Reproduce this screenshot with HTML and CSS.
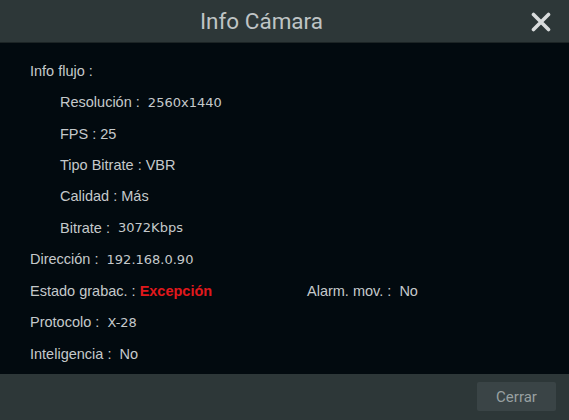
FILE: index.html
```html
<!DOCTYPE html>
<html lang="es">
<head>
<meta charset="utf-8">
<link rel="stylesheet" href="styles.css">
</head>
<body>
<div class="dialog">
  <header class="head">
    <div class="title">Info Cámara</div>
    <button class="close" aria-label="Cerrar">
      <svg width="20" height="20" viewBox="0 0 20 20"><path d="M2.5 2.5 L17.5 17.5 M17.5 2.5 L2.5 17.5" stroke="#d9dcdd" stroke-width="3.6" stroke-linecap="round"/></svg>
    </button>
  </header>
  <main class="body">
    <div class="row">Info flujo :</div>
    <div class="row sub">Resolución :&nbsp; <span class="num">2560x1440</span></div>
    <div class="row sub">FPS : 25</div>
    <div class="row sub">Tipo Bitrate : VBR</div>
    <div class="row sub">Calidad : Más</div>
    <div class="row sub">Bitrate :&nbsp; <span class="num">3072Kbps</span></div>
    <div class="row">Dirección :&nbsp; <span class="num">192.168.0.90</span></div>
    <div class="row split">
      <span>Estado grabac. : <b class="err">Excepción</b></span>
      <span>Alarm. mov. :&nbsp; No</span>
    </div>
    <div class="row">Protocolo :&nbsp; <span class="num">X-28</span></div>
    <div class="row">Inteligencia :&nbsp; No</div>
  </main>
  <footer class="foot">
    <button class="btn">Cerrar</button>
  </footer>
</div>
</body>
</html>
```
FILE: styles.css
```css
html, body {
  margin: 0;
  padding: 0;
  background: #020a0f;
}
.dialog {
  width: 569px;
  height: 420px;
  display: flex;
  flex-direction: column;
  font-family: "Liberation Sans", Arial, sans-serif;
}
.head {
  height: 43px;
  background: #2d3738;
  display: flex;
  align-items: center;
  justify-content: center;
  position: relative;
  border-bottom: 1px solid #1c2425;
  box-sizing: border-box;
}
.title {
  font-family: Roboto, "Liberation Sans", sans-serif;
  font-size: 22.5px;
  color: #bfc4c5;
  margin-top: -1px;
  margin-right: 46px;
}
.close {
  position: absolute;
  right: 17px;
  top: 11px;
  width: 22px;
  height: 22px;
  padding: 0;
  border: 0;
  background: none;
  display: flex;
  align-items: center;
  justify-content: center;
}
.body {
  flex: 1;
  background: #020a0f;
  padding: 12px 0 0 30px;
  display: flex;
  flex-direction: column;
}
.row {
  height: 31.45px;
  flex: none;
  display: flex;
  align-items: center;
  font-size: 14.5px;
  color: #c5c9cb;
  white-space: pre;
}
.row.sub {
  padding-left: 30px;
}
.num {
  font-family: "DejaVu Sans", sans-serif;
  font-size: 13px;
  color: #c5c9cb;
}
.split {
  display: grid;
  grid-template-columns: 277px auto;
  align-items: center;
}
.err {
  color: #e0181c;
  font-weight: bold;
}
.foot {
  height: 46px;
  background: #2d3738;
  display: flex;
  align-items: center;
  justify-content: flex-end;
  padding-right: 13px;
}
.btn {
  width: 79px;
  height: 29px;
  background: #3a4446;
  border: 0;
  border-radius: 2px;
  color: #98a0a1;
  font-family: Roboto, "Liberation Sans", sans-serif;
  font-size: 15px;
  padding: 0;
  margin-top: -1px;
}
```
